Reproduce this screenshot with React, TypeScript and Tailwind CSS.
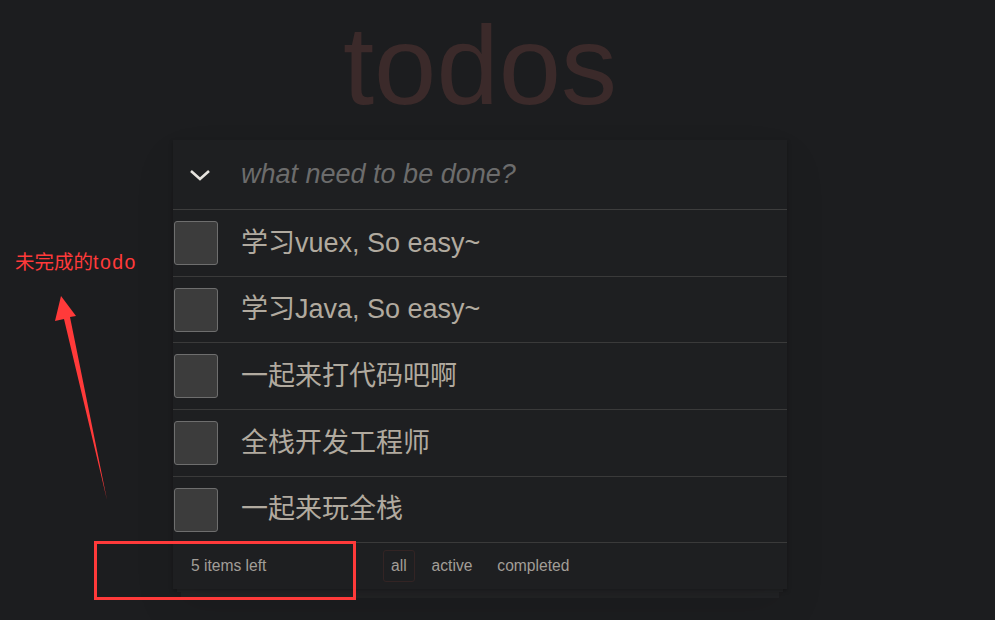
import React from "react";

const items = [
  { text: "学习vuex, So easy~", h: "h-[66px]" },
  { text: "学习Java, So easy~", h: "h-[65px]" },
  { text: "一起来打代码吧啊", h: "h-[66px]" },
  { text: "全栈开发工程师", h: "h-[66px]" },
  { text: "一起来玩全栈", h: "h-[65px]" },
];

const font = { fontFamily: '"Liberation Sans", "Noto Sans CJK SC", sans-serif' };

export default function App() {
  return (
    <div
      className="relative w-[995px] h-[620px] overflow-hidden bg-[#1c1d1f]"
      style={font}
    >
      <div className="ml-[173px] w-[614px] flex flex-col">
        <h1 className="mt-[10px] h-[112px] text-[112px] leading-none text-center text-[#3b2a2a] font-normal">
          todos
        </h1>
        <div className="mt-[18px] relative bg-[#1e1f21] shadow-[0_2px_4px_rgba(0,0,0,0.25),0_20px_40px_rgba(0,0,0,0.08)]">
          <div className="h-[70px] flex items-center border-b border-[#3d3d3d]">
            <div className="w-[54px] flex justify-center items-center">
              <svg width="22" height="14" viewBox="0 0 22 14">
                <path
                  d="M2 3 L11 11 L20 3"
                  fill="none"
                  stroke="#e6e3de"
                  strokeWidth="2.6"
                />
              </svg>
            </div>
            <span className="ml-[14px] text-[27px] italic text-[#6c6c6c]">
              what need to be done?
            </span>
          </div>
          {items.map((it, i) => (
            <div
              key={i}
              className={`${it.h} flex items-center border-b border-[#3a3a3a] box-content`}
            >
              <div className="ml-[1px] w-[44px] h-[44px] rounded-[3px] bg-[#3c3c3c] border border-[#6e6e6e] box-border" />
              <span className="ml-[23px] text-[27px] text-[#b1aa9f]">
                {it.text}
              </span>
            </div>
          ))}
          <div className="h-[46px] flex items-center pl-[18px] text-[15.6px] text-[#a29e98]">
            <span className="w-[192px]">5 items left</span>
            <div className="flex items-center gap-[9px]">
              <span className="px-[7px] py-[3px] rounded-[3px] border border-[#332424]">
                all
              </span>
              <span className="px-[8px] py-[3px]">active</span>
              <span className="px-[8px] py-[3px]">completed</span>
            </div>
          </div>
        </div>
        <div className="mx-[4px] h-[3px] bg-[#242527]" />
        <div className="mx-[8px] h-[6px] bg-[#222325]" />
      </div>

      {/* annotation */}
      <div className="absolute left-[15px] top-[253px] text-[19.5px] text-[#ff3a3a] leading-none">
        未完成的<span className="tracking-[1.5px]">todo</span>
      </div>
      <svg
        className="absolute left-0 top-0"
        width="995"
        height="620"
        viewBox="0 0 995 620"
      >
        <polygon
          points="61,296 76,316 70,317 107,500 64,319 55,321"
          fill="#ff3a3a"
        />
      </svg>
      <div className="absolute left-[94px] top-[541px] w-[262px] h-[59px] border-[3px] border-[#ff3a3a]" />
    </div>
  );
}
